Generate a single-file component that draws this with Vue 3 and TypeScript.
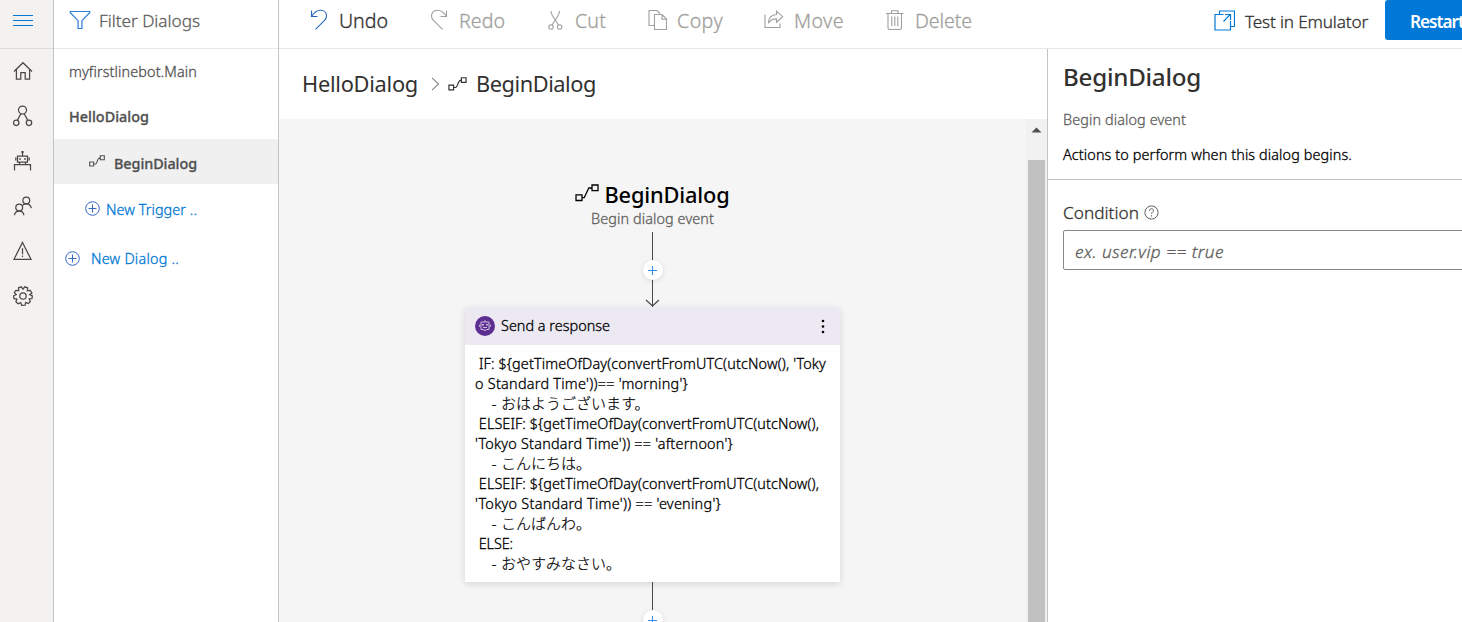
<script setup lang="ts">
import type { Directive } from 'vue'

interface Action { id: string; label: string; width: number; x: string; active?: boolean }
interface Line { text: string; width: number; tail?: string }

/* Spreads the letters of a label over the given width. */
const vFit: Directive<HTMLElement, number> = {
  mounted(el, { value }) {
    const natural = el.getBoundingClientRect().width
    const count = Array.from(el.textContent ?? '').length
    if (count) el.style.letterSpacing = `${((value - natural) / count).toFixed(3)}px`
  },
}

const actions: Action[] = [
  { id: 'undo', label: 'Undo', width: 49, x: 'a-undo', active: true },
  { id: 'redo', label: 'Redo', width: 46, x: 'a-redo' },
  { id: 'cut', label: 'Cut', width: 31, x: 'a-cut' },
  { id: 'copy', label: 'Copy', width: 46, x: 'a-copy' },
  { id: 'move', label: 'Move', width: 50, x: 'a-move' },
  { id: 'delete', label: 'Delete', width: 57, x: 'a-delete' },
]

const lines: Line[] = [
  { text: " IF: ${getTimeOfDay(convertFromUTC(utcNow(), 'Toky", width: 351 },
  { text: "o Standard Time'))== 'morning'}", width: 213 },
  { text: '    - ', width: 26, tail: 'おはようございます。' },
  { text: ' ELSEIF: ${getTimeOfDay(convertFromUTC(utcNow(),', width: 344 },
  { text: "'Tokyo Standard Time')) == 'afternoon'}", width: 258 },
  { text: '    - ', width: 26, tail: 'こんにちは。' },
  { text: ' ELSEIF: ${getTimeOfDay(convertFromUTC(utcNow(),', width: 344 },
  { text: "'Tokyo Standard Time')) == 'evening'}", width: 246 },
  { text: '    - ', width: 26, tail: 'こんばんわ。' },
  { text: ' ELSE:', width: 38 },
  { text: '    - ', width: 26, tail: 'おやすみなさい。' },
]
</script>

<template>
  <div class="app">
    <nav class="rail">
      <div class="rail-top">
        <svg width="20" height="12" viewBox="0 0 20 12"><path d="M0 .5h20M0 5.5h20M0 10.5h20" stroke="#0078d4" fill="none" /></svg>
      </div>
      <div class="rail-item">
        <svg width="20" height="20" viewBox="0 0 20 20"><path d="M1 10.5 10 1.7l9 8.8M3.4 8.5v9.7h4.4v-6.6h4.4v6.6h4.4V8.5" /></svg>
      </div>
      <div class="rail-item">
        <svg width="20" height="22" viewBox="0 0 20 22"><circle cx="9.5" cy="5" r="4" /><circle cx="3.2" cy="17.8" r="2.7" /><circle cx="16" cy="17.8" r="2.7" /><path d="M7.8 8.7 4.4 15.4M11.2 8.7l3.6 6.7" /></svg>
      </div>
      <div class="rail-item">
        <svg width="20" height="20" viewBox="0 0 20 20"><path d="M9.5 1v4M4.5 5h10v6.2h-10zM2.8 6.5v3M16.2 6.5v3M6.5 11.5v2M12.5 11.5v2M1.5 19.5v-6h16v6" /><path d="M7 7.2v1.6M12 7.2v1.6" stroke-width="1.7" /><circle cx="9.5" cy=".9" r=".6" /></svg>
      </div>
      <div class="rail-item">
        <svg width="20" height="20" viewBox="0 0 20 20"><circle cx="13.3" cy="4.4" r="3.4" /><circle cx="6.2" cy="11.6" r="3.4" /><path d="M1.5 19.3c.2-2.7 2-4.3 4.7-4.3s4.5 1.6 4.7 4.3M9.7 9.3c.7-1 1.900-1.5 3.600-1.5 2.700 0 4.500 1.600 5 4.300" /></svg>
      </div>
      <div class="rail-item">
        <svg width="20" height="20" viewBox="0 0 20 20"><path d="M9.5 1.500 18 18.300H1zM9.5 7.300v6M9.5 14.500v1.500" /></svg>
      </div>
      <div class="rail-item">
        <svg width="20" height="20" viewBox="0 0 20 20"><circle cx="10" cy="10" r="3.2" /><path d="M8.3.8 10 3.200 11.700.8 14.600 1.800 14.400 4.700 17.300 4.400 18.900 7 16.700 8.700 19.400 9.900 18.900 12.600 16.200 12.900 17.300 15.500 15.300 17.600 12.700 16.400 12 19.200 8.700 19.300 7.700 16.600 5.100 17.800 2.900 15.800 3.900 13.100 1 12.600.6 9.800 3.300 8.600 1.300 6.600 2.900 4.300 5.700 4.600 5.500 1.800Z" /></svg>
      </div>
    </nav>

    <aside class="dialogs">
      <div class="filter">
        <svg width="22" height="20" viewBox="0 0 22 20"><path d="M1.3 1.5h19.4v1.2L12.900 10.700v7.800h-3.800v-7.800L1.300 2.700z" stroke="#2b7cd8" stroke-width="1.2" fill="none" /></svg>
        <span v-fit="101" class="t17">Filter Dialogs</span>
      </div>
      <div class="row r-main"><span v-fit="128" class="t15">myfirstlinebot.Main</span></div>
      <div class="row r-hello"><span v-fit="80" class="t15 semi">HelloDialog</span></div>
      <div class="row r-begin">
        <svg width="16" height="12" viewBox="0 0 24 18" class="flow"><path d="M1 10.5h6v6H1zM17 1h6v6h-6zM7 13.5h2.500c3.500 0 2-9.500 7.500-9.500" /></svg>
        <span v-fit="83" class="t15 semi">BeginDialog</span>
      </div>
      <div class="row r-trigger link">
        <svg width="15" height="15" viewBox="0 0 15 15"><circle cx="7.5" cy="7.5" r="6.8" /><path d="M7.5 3.5v8M3.5 7.5h8" /></svg>
        <span v-fit="91" class="t15">New Trigger ..</span>
      </div>
      <div class="row r-dialog link">
        <svg width="15" height="15" viewBox="0 0 15 15"><circle cx="7.5" cy="7.5" r="6.8" /><path d="M7.5 3.5v8M3.5 7.5h8" /></svg>
        <span v-fit="88" class="t15">New Dialog ..</span>
      </div>
    </aside>

    <div class="workspace">
      <header class="toolbar">
        <div v-for="a in actions" :key="a.id" class="action" :class="[a.x, { active: a.active }]">
          <svg v-if="a.id === 'undo'" width="20" height="22" viewBox="0 0 20 22"><path d="M2.500 1.500v6h6M2.700 7.300C5 3.500 8 1.200 11.500 1.200c3.600 0 6 2.500 6 5.700 0 1.900-.8 3.400-2.200 4.800L6.500 20.300" /></svg>
          <svg v-else-if="a.id === 'redo'" width="20" height="22" viewBox="0 0 20 22"><path d="M17.500 1.500v6h-6M17.300 7.300C15 3.500 12 1.200 8.500 1.200c-3.600 0-6 2.500-6 5.700 0 1.900.8 3.400 2.200 4.800l8.800 8.600" /></svg>
          <svg v-else-if="a.id === 'cut'" width="20" height="22" viewBox="0 0 20 22"><path d="M6 2c0 2 .5 3 1.500 4.800l6.200 9.500M14.500 2c0 2-.5 3-1.500 4.800l-6.200 9.500" /><circle cx="6" cy="18" r="2.2" /><circle cx="14.6" cy="18" r="2.2" /></svg>
          <svg v-else-if="a.id === 'copy'" width="20" height="22" viewBox="0 0 20 22"><path d="M6 16.500H1V1.500h8l3 3M6.500 5.500h7.500l4.500 4.500v10.500h-12zM14 5.500v4.800h4.500" /></svg>
          <svg v-else-if="a.id === 'move'" width="20" height="22" viewBox="0 0 20 22"><path d="M1 5.500v13h15v-4M12.500 2.200l6.200 5.500-6.200 5.500v-3.300c-4.200 0-6.500 1.400-8.200 4.300.2-5 3-8.400 8.200-8.700z" /></svg>
          <svg v-else width="20" height="22" viewBox="0 0 20 22"><path d="M1 4.500h17.500M6.500 4V1.800h6.500V4M3 4.500v14.300c0 1 .6 1.700 1.600 1.700h10.300c1 0 1.600-.7 1.600-1.700V4.500M6.800 7.500v9.500M9.800 7.500v9.500M12.800 7.500v9.500" /></svg>
          <span v-fit="a.width" class="t20">{{ a.label }}</span>
        </div>
        <div class="emulator">
          <svg width="21" height="21" viewBox="0 0 21 21"><path d="M5.500 4.500V1h15v15.500h-3.500M16.500 11v9H1V4.500h8.500M9.500 11.500l6.500-6.800M11 4.500h5.500V10" /></svg>
          <span v-fit="123" class="t17">Test in Emulator</span>
        </div>
        <button class="restart"><span v-fit="54" class="t17 bold">Restart</span></button>
      </header>

      <div class="body">
        <main class="editor">
          <div class="crumbs">
            <span v-fit="116" class="t22">HelloDialog</span>
            <svg class="chevron" width="9" height="14" viewBox="0 0 9 14"><path d="M1 .8 7.500 7 1 13.200" /></svg>
            <svg class="flow" width="19" height="14" viewBox="0 0 24 18"><path d="M1 10.500h6v6H1zM17 1h6v6h-6zM7 13.500h2.500c3.500 0 2-9.500 7.500-9.500" /></svg>
            <span v-fit="120" class="t22">BeginDialog</span>
          </div>
          <div class="canvas">
            <div class="flowchart">
              <div class="node-title">
                <svg width="24" height="18" viewBox="0 0 24 18"><path d="M1 10.800h6v5.700H1zM17 1h6v5.700h-6zM7 13.700h2.200l4.600-9.700H17" /></svg>
                <span v-fit="125" class="t22 medium">BeginDialog</span>
              </div>
              <div class="node-sub"><span v-fit="123" class="t15">Begin dialog event</span></div>
              <div class="link-line">
                <i class="add"><svg width="11" height="11" viewBox="0 0 11 11"><path d="M5.500 1v9M1 5.500h9" /></svg></i>
                <svg class="arrow" width="15" height="8" viewBox="0 0 15 8"><path d="M1 1l6.500 6L14 1" /></svg>
              </div>
              <section class="card">
                <div class="card-head">
                  <svg width="20" height="20" viewBox="0 0 20 20"><circle cx="10" cy="10" r="10" fill="#5c2e91" stroke="none" /><path d="M6 6h8v7.500h-2.800L10 15l-1.200-1.500H6zM10 6V4.200M4.700 8.500v2.500M15.300 8.500v2.500M8 11.500h4" fill="none" stroke="#d9cbe8" stroke-width=".9" /><path d="M8 8v1.400M12 8v1.400" stroke="#fff" stroke-width="1.3" /></svg>
                  <span v-fit="109" class="t15">Send a response</span>
                  <svg class="dots" width="4" height="15" viewBox="0 0 4 15"><circle cx="2" cy="2" r="1.3" /><circle cx="2" cy="7.5" r="1.3" /><circle cx="2" cy="13" r="1.3" /></svg>
                </div>
                <div class="card-body">
                  <div v-for="(l, i) in lines" :key="i" class="line"><span v-fit="l.width" class="t15">{{ l.text }}</span><span v-if="l.tail" class="jp">{{ l.tail }}</span></div>
                </div>
              </section>
              <div class="link-line tail">
                <i class="add"><svg width="11" height="11" viewBox="0 0 11 11"><path d="M5.500 1v9M1 5.500h9" /></svg></i>
              </div>
            </div>
            <div class="scrollbar">
              <svg width="11" height="6" viewBox="0 0 11 6"><path d="M.5 5.500 5.500.5l5 5z" fill="#505050" /></svg>
              <div class="thumb"></div>
            </div>
          </div>
        </main>

        <aside class="props">
          <div class="props-head">
            <h1><span v-fit="138" class="t24">BeginDialog</span></h1>
            <p class="sub"><span v-fit="123" class="t15">Begin dialog event</span></p>
            <p class="desc"><span v-fit="289" class="t15">Actions to perform when this dialog begins.</span></p>
          </div>
          <div class="field-label">
            <span v-fit="76" class="t17">Condition</span>
            <svg width="15" height="15" viewBox="0 0 15 15"><circle cx="7.5" cy="7.5" r="6.6" /><path d="M5.500 5.800c0-1.300.8-2.100 2-2.100s2 .8 2 1.900c0 1.500-2 1.700-2 3.300M7.500 10.200v1.300" /></svg>
          </div>
          <div class="input"><span v-fit="149" class="t17 italic">ex. user.vip == true</span></div>
        </aside>
      </div>
    </div>
  </div>
</template>

<style>
html, body { margin: 0; overflow: hidden; background: #fff; }
</style>

<style scoped>
.app {
  display: flex;
  width: 1462px;
  height: 622px;
  overflow: hidden;
  background: #fff;
  color: #323130;
  font-family: "Noto Sans", "Open Sans", "Noto Sans CJK JP", sans-serif;
}
.app * { box-sizing: border-box; }
svg { display: block; flex: none; fill: none; stroke: currentColor; stroke-width: 1.1; }
span { display: inline-block; flex: none; white-space: pre; line-height: 20px; }
.t15, .t17, .t20 { font-weight: 300; -webkit-text-stroke: .3px currentColor; }
.t15 { font-size: 14.4px; }
.t17 { font-size: 17.2px; }
.t20 { font-size: 19.6px; }
.t22 { font-size: 21.8px; line-height: 28px; font-weight: 400; }
.t24 { font-size: 24.2px; line-height: 30px; font-weight: 500; }
.t15.semi { font-weight: 500; }
.t17.bold { font-weight: 600; -webkit-text-stroke: 0; }
.medium { font-weight: 500; }
.italic { font-style: italic; }

.rail { flex: none; width: 54px; background: #f3f2f1; border-right: 1px solid #c4c4c4; color: #494847; }
.rail-top { height: 49px; padding: 15px 0 0 13px; border-bottom: 1px solid #dcdbda; }
.rail-item { display: flex; align-items: center; height: 45px; padding: 0 0 1px 13px; }
.rail-item svg { stroke-width: 1.25; }

.dialogs { flex: none; width: 225px; border-right: 1px solid #c4c4c4; color: #505050; }
.filter { display: flex; height: 49px; padding: 10px 0 0 15px; gap: 8px; border-bottom: 1px solid #e9e9e9; }
.filter span { margin-top: 1px; color: #605e5c; }
.row { display: flex; align-items: center; height: 45px; padding-left: 15px; }
.r-begin { padding-left: 35px; gap: 9px; background: #f0f0f0; padding-top: 4px; }
.r-begin svg { margin-top: -6px; stroke-width: 1.6; }
.r-trigger { height: 51px; padding-left: 31px; gap: 6px; }
.r-dialog { height: 47px; padding-left: 11px; gap: 11px; }
.link { color: #0078d4; }
.link svg { color: #3567c4; stroke-width: 1; margin-top: -2px; }
.r-dialog svg { margin-top: -1px; }

.workspace { display: flex; flex: 1; flex-direction: column; min-width: 0; }
.toolbar { display: flex; flex: none; height: 49px; padding-left: 30px; border-bottom: 1px solid #e6e6e6; overflow: hidden; }
.action { display: flex; flex: none; gap: 10px; padding-top: 9px; color: #a19f9d; }
.action span { margin-top: 2px; }
.action.active { color: #323130; }
.action.active svg { color: #2565bd; }
.a-undo { width: 120px; }
.a-redo { width: 116px; }
.a-cut { width: 103px; }
.a-copy { width: 116px; gap: 9px; }
.a-move { width: 121px; gap: 10px; }
.a-delete { width: 329px; gap: 10px; }
.emulator { display: flex; flex: none; width: 171px; gap: 10px; padding-top: 10px; }
.emulator svg { color: #0078d4; stroke-width: 1.2; }
.emulator span { margin-top: 2px; }
.restart { flex: none; width: 130px; height: 40px; padding: 3px 0 0 25px; border: 0; border-radius: 3px; background: #0078d7; color: #fff; font-family: inherit; text-align: left; }

.body { display: flex; flex: 1; min-height: 0; }
.editor { display: flex; flex: none; flex-direction: column; width: 768px; }
.crumbs { display: flex; flex: none; align-items: center; height: 70px; padding-left: 23px; }
.chevron { margin: 0 8px 0 13px; color: #8a8886; }
.crumbs .flow { margin-right: 9px; stroke-width: 1.5; }
.canvas { display: flex; flex: 1; min-height: 0; background: #f5f5f5; overflow: hidden; }
.flowchart { display: flex; flex: none; flex-direction: column; align-items: center; width: 747px; height: 503px; padding-top: 62px; color: #000; overflow: hidden; }
.node-title { display: flex; flex: none; gap: 6px; height: 26px; margin-left: -1px; }
.node-title svg { margin-top: 3px; stroke-width: 1.3; }
.node-sub { flex: none; height: 24px; color: #605e5c; }
.link-line { position: relative; display: flex; flex: none; flex-direction: column; align-items: center; width: 21px; height: 75px; margin-top: 1px; background: linear-gradient(#494847, #494847) 10px 0 / 1px 100% no-repeat; }
.link-line.tail { margin-top: 0; }
.add { display: flex; flex: none; align-items: center; justify-content: center; width: 20px; height: 20px; margin-top: 28px; border-radius: 50%; background: #fff; box-shadow: 0 1px 5px rgba(0, 0, 0, .12); color: #368be0; }
.arrow { margin-top: 19px; color: #494847; stroke-width: 1.2; }
.card { flex: none; width: 375px; height: 275px; border-radius: 3px 3px 0 0; background: #fff; box-shadow: 0 2px 7px rgba(0, 0, 0, .13); }
.card-head { display: flex; align-items: center; height: 38px; padding: 0 15px 0 10px; border-radius: 3px 3px 0 0; background: #ece9f3; }
.card-head span { margin-left: 6px; }
.dots { margin-left: auto; fill: #000; stroke: none; }
.card-body { padding: 9px 0 0 10px; }
.line { display: flex; height: 20px; }
.jp { margin-top: -1px; font-family: "Noto Sans CJK JP", sans-serif; font-size: 15px; font-weight: 300; -webkit-text-stroke: .2px currentColor; }

.scrollbar { display: flex; flex: none; flex-direction: column; align-items: center; width: 21px; padding-top: 8px; background: #f1f1f1; }
.scrollbar svg { stroke: none; }
.thumb { flex: none; width: 17px; height: 470px; margin-top: 27px; margin-left: -1px; background: #c1c1c1; }

.props { flex: 1; min-width: 0; border-left: 1px solid #c4c4c4; overflow: hidden; }
.props-head { height: 131px; padding: 13px 0 0 15px; border-bottom: 1px solid #c4c4c4; }
.props h1, .props p { margin: 0; font-weight: 400; line-height: 0; }
.props .sub { margin-top: 18px; color: #605e5c; }
.props .desc { margin-top: 15px; color: #000; }
.field-label { display: flex; align-items: center; height: 20px; margin: 22px 0 0 15px; gap: 5px; }
.field-label span { margin-top: 1px; }
.field-label svg { stroke-width: 1; color: #605e5c; }
.input { display: flex; align-items: center; width: 430px; height: 40px; margin: 8px 0 0 15px; padding-left: 11px; padding-top: 3px; border: 1px solid #8a8886; border-radius: 2px; color: #605e5c; }
</style>
